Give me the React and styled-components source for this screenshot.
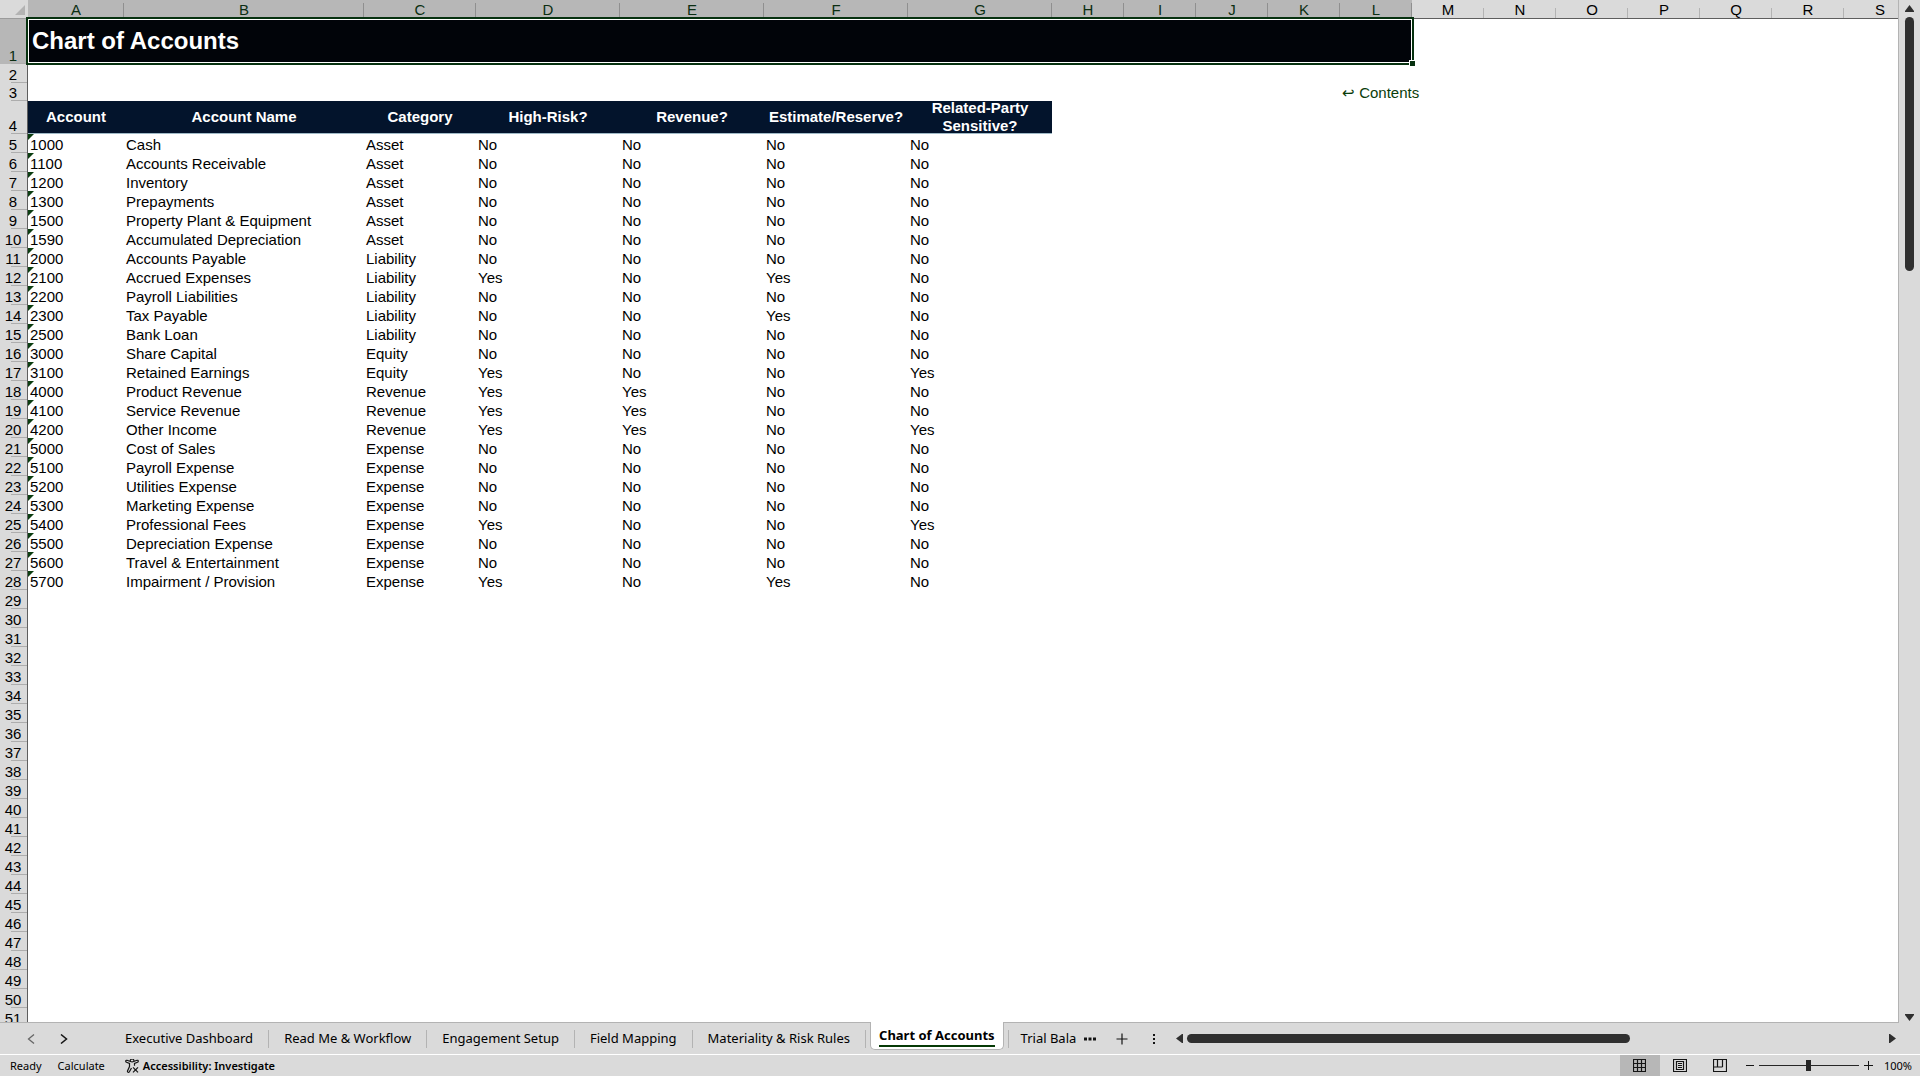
import React from "react";
import styled, { createGlobalStyle } from "styled-components";

const GlobalStyle = createGlobalStyle`
  * {
    box-sizing: border-box;
  }
  body {
    margin: 0;
    overflow: hidden;
    background-color: #dadada;
    font-family: "Liberation Sans", Arial, sans-serif;
  }
  button {
    border: none;
    padding: 0;
    background: none;
    color: inherit;
    font-family: inherit;
    cursor: pointer;
  }
`;

const Container = styled.div`
  height: 100vh;
  display: flex;
  flex-direction: column;
  color: black;
`;

const Workbook = styled.main`
  flex: 1;
  min-height: 0;
  display: flex;
`;

const Sheet = styled.div`
  flex: 1;
  min-width: 0;
  overflow: hidden;
  background-color: white;
  border-right: 1px solid #b3b3b3;
  border-bottom: 1px solid #b3b3b3;
`;

const Table = styled.table`
  width: 1916px;
  table-layout: fixed;
  border-collapse: separate;
  border-spacing: 0;
  font-size: 15px;
  line-height: 17px;
`;

const Col = styled.col`
  width: ${(props) => props.$width}px;
`;

const Row = styled.tr`
  height: ${(props) => props.$height || 19}px;
`;

const Corner = styled.td`
  padding: 0 3px 3px 0;
  border-bottom: 1px solid #9b9b9b;
  background-color: #dadada;
  vertical-align: bottom;

  svg {
    display: block;
    margin-left: auto;
  }
`;

const ColumnHead = styled.th`
  padding: 2px 0 0;
  font-size: 15px;
  font-weight: normal;
  line-height: 16px;
  border-bottom: 1px solid #5e5e5e;
  color: ${(props) => (props.$selected ? "#0b2e12" : "black")};
  background: ${(props) =>
    props.$selected
      ? "linear-gradient(#8f8f8f, #8f8f8f) right bottom / 1px 15px no-repeat #b7b7b7"
      : "linear-gradient(#b3b3b3, #b3b3b3) right bottom / 1px 10px no-repeat #dadada"};
`;

const RowHead = styled.th`
  padding: 0 1px 0 0;
  font-size: 15px;
  font-weight: normal;
  line-height: 16px;
  vertical-align: bottom;
  border-right: 1px solid #5e5e5e;
  color: ${(props) => (props.$selected ? "#0b2e12" : "black")};
  background: linear-gradient(#adadad, #adadad) right bottom / 16px 1px
    no-repeat ${(props) => (props.$selected ? "#b7b7b7" : "#dadada")};
`;

const TitleCell = styled.td`
  position: relative;
  padding: 0 0 2px 4px;
  background-color: #010409;
  color: white;
  font-size: 24px;
  font-weight: bold;
  line-height: 28px;
`;

const Selection = styled.div`
  position: absolute;
  top: -2px;
  right: -2px;
  bottom: -1px;
  left: -2px;
  border: 2px solid #06310f;
  box-shadow: inset 0 0 0 1px white;
`;

const FillHandle = styled.span`
  position: absolute;
  right: -3px;
  bottom: -3px;
  width: 6px;
  height: 6px;
  border: 1px solid white;
  border-right: none;
  border-bottom: none;
  background-color: #06310f;
`;

const FieldHead = styled.th`
  padding: 0 8px;
  background-color: #03142c;
  color: white;
  line-height: 18px;
  border-bottom: 1px solid #9fb9c6;
`;

const FieldLabel = styled.div`
  height: 32px;
  display: flex;
  align-items: center;
  justify-content: center;
`;

const Cell = styled.td`
  position: relative;
  padding: 1px 2px 0;
  white-space: nowrap;
`;

const TextMark = styled.span`
  position: absolute;
  top: 0;
  left: 0;
  border-top: 6px solid #0b3d10;
  border-right: 6px solid transparent;
`;

const ContentsLink = styled.a`
  color: #0a3d0a;
  text-decoration: none;
`;

const VerticalScroll = styled.div`
  width: 21px;
  padding: 5px 6px 2px;
  display: flex;
  flex-direction: column;
  justify-content: space-between;
  align-items: center;
`;

const VerticalTrack = styled.div`
  flex: 1;
  width: 9px;
  margin: 5px 0;
`;

const VerticalThumb = styled.div`
  height: 25.6%;
  border-radius: 5px;
  background-color: #2f2f2f;
`;

const ArrowButton = styled.button`
  display: flex;
`;

const TabBar = styled.div`
  height: 32px;
  display: flex;
  border-bottom: 1px solid white;
  font-family: "Noto Sans", "Open Sans", sans-serif;
`;

const TabStrip = styled.div`
  width: 61%;
  display: flex;
  align-items: center;
`;

const TabArrows = styled.div`
  width: 110px;
  padding-left: 27px;
  display: flex;
  gap: 25px;
`;

const Tabs = styled.nav`
  align-self: stretch;
  display: flex;
  align-items: center;
  min-width: 0;
`;

const Tab = styled.button`
  height: 18px;
  padding: 0 15px 2px;
  border-right: 1px solid #b3b3b3;
  font-size: 13px;
  line-height: 16px;
  white-space: nowrap;

  &:last-child {
    padding: 0 8px 2px 12px;
    border-right: none;
    border-left: 1px solid #b3b3b3;
  }
`;

const ActiveTab = styled.button`
  align-self: flex-start;
  height: 28px;
  margin: -1px 4px 0;
  padding: 0 8px;
  border: 1px solid #b3b3b3;
  border-top: none;
  border-radius: 0 0 5px 5px;
  background-color: white;
  font-size: 13px;
  font-weight: bold;
  white-space: nowrap;

  span {
    display: block;
    line-height: 20px;
    border-bottom: 2px solid #063a06;
  }
`;

const StripButtons = styled.div`
  display: flex;
  align-items: center;
  gap: 20px;
`;

const HorizontalScroll = styled.div`
  flex: 1;
  padding: 0 24px 0 5px;
  display: flex;
  align-items: center;
  gap: 4px;
`;

const HorizontalTrack = styled.div`
  flex: 1;
`;

const HorizontalThumb = styled.div`
  width: 63.4%;
  height: 9px;
  border-radius: 5px;
  background-color: #2f2f2f;
`;

const StatusBar = styled.footer`
  height: 21px;
  padding: 0 8px 0 10px;
  display: flex;
  align-items: center;
  justify-content: space-between;
  font-family: "Noto Sans", "Open Sans", sans-serif;
  font-size: 11px;
`;

const StatusGroup = styled.div`
  height: 100%;
  display: flex;
  align-items: center;
  gap: 16px;
`;

const Accessibility = styled.button`
  display: flex;
  align-items: center;
  gap: 4px;
  margin-left: 4px;
  font-size: 11px;
  font-weight: 600;
`;

const ViewButtons = styled.div`
  height: 100%;
  display: flex;
`;

const ViewButton = styled.button`
  width: 40px;
  height: 100%;
  display: flex;
  align-items: center;
  justify-content: center;
  background-color: ${(props) => (props.$active ? "#b7b7b7" : "transparent")};
`;

const Zoom = styled.div`
  margin-left: -10px;
  display: flex;
  align-items: center;
  gap: 5px;
`;

const ZoomSlider = styled.input`
  appearance: none;
  width: 100px;
  height: 11px;
  margin: 0;
  background: linear-gradient(#262626, #262626) center / 100% 1px no-repeat;

  &::-webkit-slider-thumb {
    appearance: none;
    width: 5px;
    height: 11px;
    background-color: #262626;
  }
`;

const ZoomValue = styled.button`
  margin-left: 6px;
  font-size: 11px;
`;

const columns = [
  ["A", 96],
  ["B", 240],
  ["C", 112],
  ["D", 144],
  ["E", 144],
  ["F", 144],
  ["G", 144],
  ..."HIJKLMNOPQRS".split("").map((letter) => [letter, 72]),
];

const fields = [
  "Account",
  "Account Name",
  "Category",
  "High-Risk?",
  "Revenue?",
  "Estimate/Reserve?",
  "Related-Party Sensitive?",
];

const accounts = [
  ["1000", "Cash", "Asset", "No", "No", "No", "No"],
  ["1100", "Accounts Receivable", "Asset", "No", "No", "No", "No"],
  ["1200", "Inventory", "Asset", "No", "No", "No", "No"],
  ["1300", "Prepayments", "Asset", "No", "No", "No", "No"],
  ["1500", "Property Plant & Equipment", "Asset", "No", "No", "No", "No"],
  ["1590", "Accumulated Depreciation", "Asset", "No", "No", "No", "No"],
  ["2000", "Accounts Payable", "Liability", "No", "No", "No", "No"],
  ["2100", "Accrued Expenses", "Liability", "Yes", "No", "Yes", "No"],
  ["2200", "Payroll Liabilities", "Liability", "No", "No", "No", "No"],
  ["2300", "Tax Payable", "Liability", "No", "No", "Yes", "No"],
  ["2500", "Bank Loan", "Liability", "No", "No", "No", "No"],
  ["3000", "Share Capital", "Equity", "No", "No", "No", "No"],
  ["3100", "Retained Earnings", "Equity", "Yes", "No", "No", "Yes"],
  ["4000", "Product Revenue", "Revenue", "Yes", "Yes", "No", "No"],
  ["4100", "Service Revenue", "Revenue", "Yes", "Yes", "No", "No"],
  ["4200", "Other Income", "Revenue", "Yes", "Yes", "No", "Yes"],
  ["5000", "Cost of Sales", "Expense", "No", "No", "No", "No"],
  ["5100", "Payroll Expense", "Expense", "No", "No", "No", "No"],
  ["5200", "Utilities Expense", "Expense", "No", "No", "No", "No"],
  ["5300", "Marketing Expense", "Expense", "No", "No", "No", "No"],
  ["5400", "Professional Fees", "Expense", "Yes", "No", "No", "Yes"],
  ["5500", "Depreciation Expense", "Expense", "No", "No", "No", "No"],
  ["5600", "Travel & Entertainment", "Expense", "No", "No", "No", "No"],
  ["5700", "Impairment / Provision", "Expense", "Yes", "No", "Yes", "No"],
];

const emptyRows = Array.from({ length: 23 }, (_, i) => i + 29);

const arrows = {
  up: ["0 0 9 7", "M4.5 0 9 6v1H0V6z"],
  down: ["0 0 9 7", "M4.5 7 9 1V0H0v1z"],
  left: ["0 0 7 9", "M0 4.5 6 0h1v9H6z"],
  right: ["0 0 7 9", "M7 4.5 1 0H0v9h1z"],
};

const ScrollArrow = ({ direction }) => {
  const [viewBox, path] = arrows[direction];
  const [, , width, height] = viewBox.split(" ");
  return (
    <ArrowButton aria-label={`Scroll ${direction}`}>
      <svg width={width} height={height} viewBox={viewBox} fill="#2f2f2f">
        <path d={path} />
      </svg>
    </ArrowButton>
  );
};

const Stroke = ({ width, height, d, color = "#141414", weight = 1 }) => (
  <svg
    width={width}
    height={height}
    viewBox={`0 0 ${width} ${height}`}
    fill="none"
    stroke={color}
    strokeWidth={weight}
  >
    <path d={d} />
  </svg>
);

const Grid = () => (
  <Table>
    <colgroup>
      <Col $width={28} />
      {columns.map(([letter, width]) => (
        <Col key={letter} $width={width} />
      ))}
    </colgroup>
    <thead>
      <Row>
        <Corner>
          <svg width="10" height="10" viewBox="0 0 10 10" fill="#b3b3b3">
            <path d="M10 0v10H0z" />
          </svg>
        </Corner>
        {columns.map(([letter], i) => (
          <ColumnHead key={letter} scope="col" $selected={i < 12}>
            {letter}
          </ColumnHead>
        ))}
      </Row>
    </thead>
    <tbody>
      <Row $height={45}>
        <RowHead scope="row" $selected>
          1
        </RowHead>
        <TitleCell colSpan={12}>
          Chart of Accounts
          <Selection>
            <FillHandle />
          </Selection>
        </TitleCell>
      </Row>
      <Row>
        <RowHead scope="row">2</RowHead>
      </Row>
      <Row $height={18}>
        <RowHead scope="row">3</RowHead>
        <Cell colSpan={11} />
        <Cell>
          <ContentsLink href="#contents">↩ Contents</ContentsLink>
        </Cell>
      </Row>
      <Row $height={33}>
        <RowHead scope="row">4</RowHead>
        {fields.map((field) => (
          <FieldHead key={field}>
            <FieldLabel>{field}</FieldLabel>
          </FieldHead>
        ))}
      </Row>
      {accounts.map((account, i) => (
        <Row key={account[0]}>
          <RowHead scope="row">{i + 5}</RowHead>
          {account.map((value, j) => (
            <Cell key={j}>
              {j === 0 && <TextMark />}
              {value}
            </Cell>
          ))}
        </Row>
      ))}
      {emptyRows.map((number) => (
        <Row key={number}>
          <RowHead scope="row">{number}</RowHead>
        </Row>
      ))}
    </tbody>
  </Table>
);

const App = () => {
  return (
    <Container>
      <GlobalStyle />
      <Workbook>
        <Sheet>
          <Grid />
        </Sheet>
        <VerticalScroll>
          <ScrollArrow direction="up" />
          <VerticalTrack>
            <VerticalThumb />
          </VerticalTrack>
          <ScrollArrow direction="down" />
        </VerticalScroll>
      </Workbook>
      <TabBar>
        <TabStrip>
          <TabArrows>
            <ArrowButton aria-label="Previous sheet">
              <Stroke width={8} height={10} d="M7 .5 1.5 5 7 9.5" color="#666" weight={1.3} />
            </ArrowButton>
            <ArrowButton aria-label="Next sheet">
              <Stroke width={8} height={10} d="M1 .5 6.5 5 1 9.5" weight={1.5} />
            </ArrowButton>
          </TabArrows>
          <Tabs>
            <Tab>Executive Dashboard</Tab>
            <Tab>Read Me & Workflow</Tab>
            <Tab>Engagement Setup</Tab>
            <Tab>Field Mapping</Tab>
            <Tab>Materiality & Risk Rules</Tab>
            <ActiveTab aria-current="page">
              <span>Chart of Accounts</span>
            </ActiveTab>
            <Tab>Trial Bala</Tab>
          </Tabs>
          <StripButtons>
            <ArrowButton aria-label="More sheets">
              <svg width="12" height="4" viewBox="0 0 12 4" fill="#141414">
                <path d="M0 .5h3v3H0zM4.5 .5h3v3h-3zM9 .5h3v3H9z" />
              </svg>
            </ArrowButton>
            <ArrowButton aria-label="New sheet">
              <Stroke width={12} height={12} d="M6 .5v11M.5 6h11" weight={1.2} />
            </ArrowButton>
            <ArrowButton aria-label="Resize tabs">
              <svg width="12" height="12" viewBox="0 0 12 12" fill="#141414">
                <path d="M5 1h2v2H5zM5 5h2v2H5zM5 9h2v2H5z" />
              </svg>
            </ArrowButton>
          </StripButtons>
        </TabStrip>
        <HorizontalScroll>
          <ScrollArrow direction="left" />
          <HorizontalTrack>
            <HorizontalThumb />
          </HorizontalTrack>
          <ScrollArrow direction="right" />
        </HorizontalScroll>
      </TabBar>
      <StatusBar>
        <StatusGroup>
          <span>Ready</span>
          <span>Calculate</span>
          <Accessibility>
            <Stroke
              width={14}
              height={14}
              weight={1.2}
              d="M5.5 2.5a1.800 1.800 0 1 1 3.200 0M5.5 2.5 2 1.300C.5 1 .3 2.600 1.5 3.200L4.5 4.5v3L2.5 12c-.3 1.300 1.200 1.800 1.900.7L6.5 9M8.700 2.5 12 1.300c1.5-.3 1.700 1.300.5 1.900L9.5 4.5v2.300M5.5 2.5q1.600.8 3.200 0M8 8.300l5 5M13 8.300l-5 5"
            />
            Accessibility: Investigate
          </Accessibility>
        </StatusGroup>
        <StatusGroup>
          <ViewButtons>
            <ViewButton $active aria-label="Normal view">
              <Stroke width={13} height={13} d="M.5.5h12v12H.5zM4.5.5v12M8.5.5v12M.5 4.5h12M.5 8.5h12" weight={1.2} />
            </ViewButton>
            <ViewButton aria-label="Page layout">
              <Stroke width={14} height={13} d="M.5.5h13v12H.5zM3.5 2.5h7v8h-7zM5 4.5h4M5 6.5h4M5 8.5h4" weight={1.2} />
            </ViewButton>
            <ViewButton aria-label="Page break preview">
              <Stroke width={14} height={13} d="M.5.5h13v12H.5zM4.5.5v7.5M9.5.5v7.5M.5 8h9" weight={1.2} />
            </ViewButton>
          </ViewButtons>
          <Zoom>
            <ArrowButton aria-label="Zoom out">
              <Stroke width={8} height={9} d="M0 4.5h8" />
            </ArrowButton>
            <ZoomSlider type="range" aria-label="Zoom" min="0" max="100" defaultValue="50" />
            <ArrowButton aria-label="Zoom in">
              <Stroke width={9} height={9} d="M4.5 0v9M0 4.5h9" />
            </ArrowButton>
            <ZoomValue>100%</ZoomValue>
          </Zoom>
        </StatusGroup>
      </StatusBar>
    </Container>
  );
};

export default App;
